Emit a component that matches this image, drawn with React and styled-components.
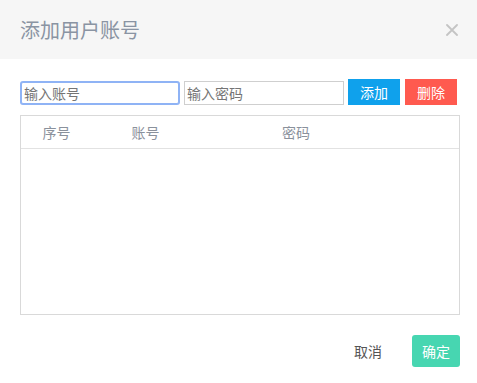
import React from "react";
import styled, { createGlobalStyle } from "styled-components";

const Global = createGlobalStyle`
  html, body { margin: 0; padding: 0; background: #fff; }
  body { font-family: "Noto Sans CJK SC", "Noto Sans", sans-serif; }
  * { box-sizing: border-box; }
`;

const Dialog = styled.div`
  width: 477px;
  height: 383px;
  display: flex;
  flex-direction: column;
  background: #fff;
`;

const Header = styled.div`
  height: 59px;
  background: #f6f6f6;
  display: flex;
  align-items: center;
  justify-content: space-between;
  padding: 0 18px 0 20px;
`;

const Title = styled.div`
  font-size: 20px;
  color: #8a94a3;
  line-height: 1;
  margin-top: 1px;
`;

const Close = styled.button`
  border: 0;
  background: transparent;
  padding: 0;
  width: 14px;
  height: 14px;
  display: flex;
  align-items: center;
  justify-content: center;
  cursor: pointer;
`;

const Body = styled.div`
  padding: 20px 18px 0 20px;
  display: flex;
  flex-direction: column;
`;

const Toolbar = styled.div`
  display: flex;
  align-items: center;
  gap: 4px;
  height: 26px;
`;

const Input = styled.input`
  width: ${(p) => (p.$focused ? "158px" : "160px")};
  height: ${(p) => (p.$focused ? "22px" : "24px")};
  margin: ${(p) => (p.$focused ? "1px 1px 0 1px" : "1px 0 0 0")};
  padding: 0 2px;
  font-family: inherit;
  font-size: 14px;
  color: #333;
  outline: none;
  border: 1px solid ${(p) => (p.$focused ? "#8fb3f5" : "#cfcfcf")};
  border-radius: ${(p) => (p.$focused ? "2px" : "0")};
  box-shadow: ${(p) => (p.$focused ? "0 0 0 1px #8fb3f5" : "none")};
  &::placeholder { color: #757575; }
`;

const Btn = styled.button`
  width: 52px;
  height: 26px;
  border: 0;
  margin-left: ${(p) => (p.$first ? "0" : "1px")};
  background: ${(p) => p.$bg};
  color: #fff;
  font-family: inherit;
  font-size: 14px;
  padding: 0;
  cursor: pointer;
`;

const Table = styled.div`
  margin-top: 10px;
  width: 440px;
  height: 200px;
  border: 1px solid #d9d9d9;
`;

const HeadRow = styled.div`
  display: grid;
  grid-template-columns: 71px 107px 194px 1fr;
  height: 33px;
  border-bottom: 1px solid #e2e2e2;
  align-items: center;
`;

const Th = styled.div`
  text-align: center;
  font-size: 14px;
  color: #8a919c;
`;

const Footer = styled.div`
  display: flex;
  justify-content: flex-end;
  align-items: center;
  gap: 16px;
  padding: 20px 17px 0 0;
`;

const TextBtn = styled.button`
  border: 0;
  background: transparent;
  font-family: inherit;
  font-size: 14px;
  color: #555;
  padding: 0 14px;
  height: 32px;
  cursor: pointer;
`;

const Primary = styled.button`
  width: 48px;
  height: 32px;
  border: 0;
  border-radius: 3px;
  background: #47d6b1;
  color: #fff;
  font-family: inherit;
  font-size: 14px;
  padding: 0;
  cursor: pointer;
`;

export default function App() {
  return (
    <>
      <Global />
      <Dialog>
        <Header>
          <Title>添加用户账号</Title>
          <Close aria-label="关闭">
            <svg width="12" height="12" viewBox="0 0 12 12">
              <path d="M1 1L11 11M11 1L1 11" stroke="#c4c4c4" strokeWidth="1.8" strokeLinecap="round" />
            </svg>
          </Close>
        </Header>
        <Body>
          <Toolbar>
            <Input $focused placeholder="输入账号" />
            <Input placeholder="输入密码" />
            <Btn $first $bg="#0fa1ec">添加</Btn>
            <Btn $bg="#ff5a4f">删除</Btn>
          </Toolbar>
          <Table>
            <HeadRow>
              <Th>序号</Th>
              <Th>账号</Th>
              <Th>密码</Th>
              <Th />
            </HeadRow>
          </Table>
        </Body>
        <Footer>
          <TextBtn>取消</TextBtn>
          <Primary>确定</Primary>
        </Footer>
      </Dialog>
    </>
  );
}
